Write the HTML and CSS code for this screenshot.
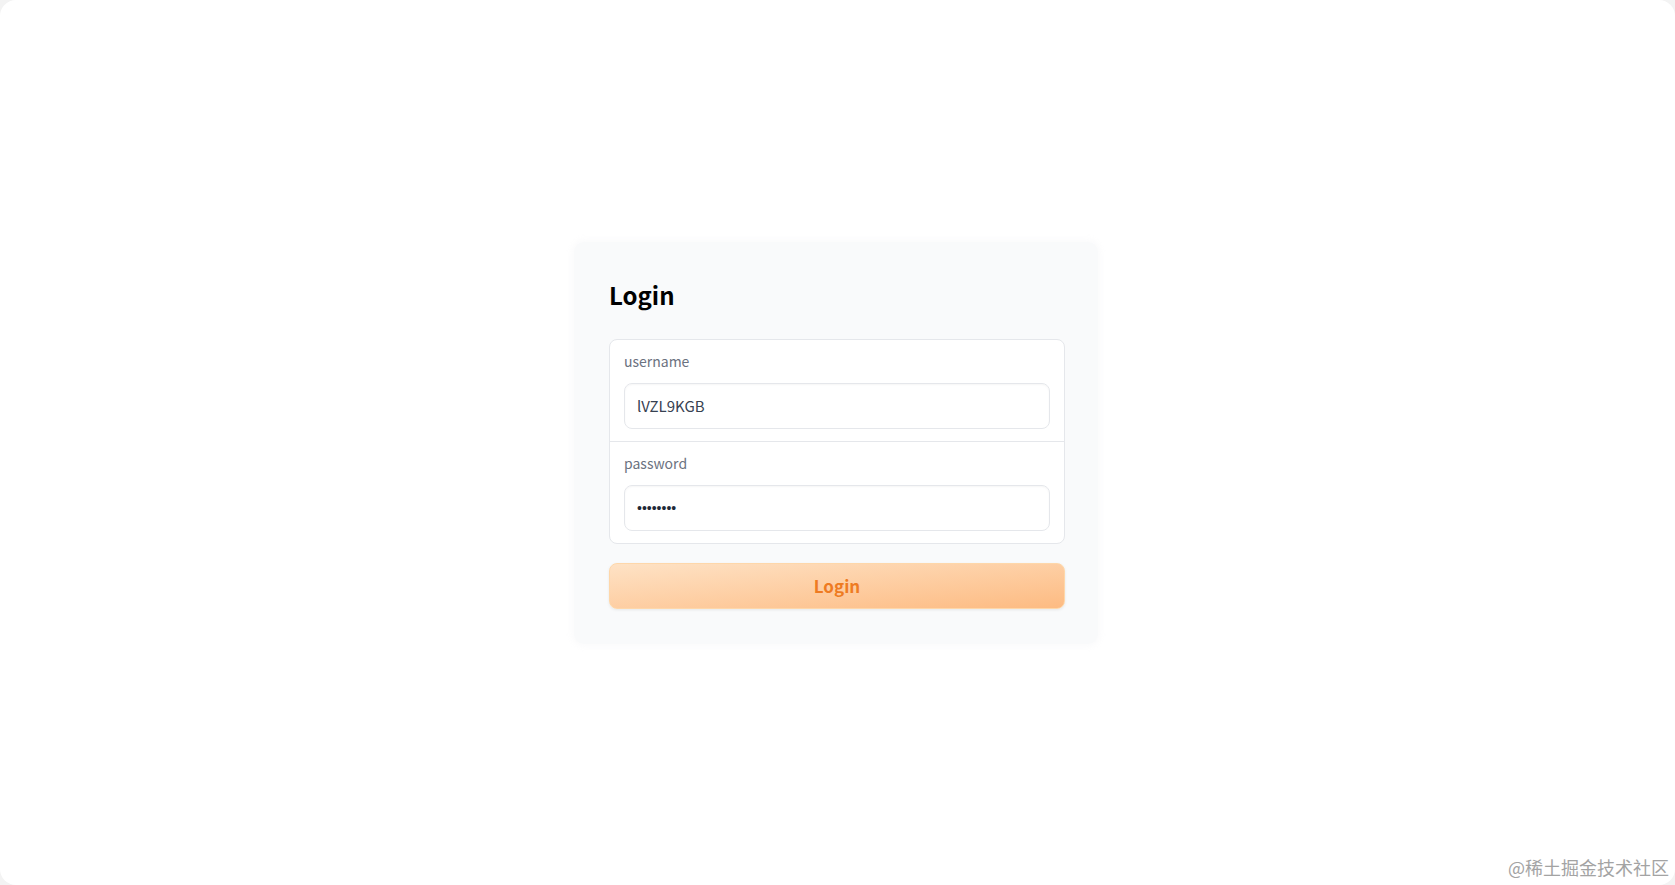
FILE: index.html
```
<!DOCTYPE html>
<html lang="en">
<head>
<meta charset="utf-8">
<title>Login</title>
<link rel="stylesheet" href="styles.css">
</head>
<body>
<div class="frame">
  <div class="card">
    <h2 class="title">Login</h2>
    <div class="form">
      <label class="block">
        <span class="label">username</span>
        <input class="input" type="text" value="lVZL9KGB">
      </label>
      <label class="block">
        <span class="label">password</span>
        <input class="input pwd" type="password" value="12345678">
      </label>
    </div>
    <button class="btn" type="button">Login</button>
  </div>
  <div class="watermark">@稀土掘金技术社区</div>
</div>
</body>
</html>
```
FILE: styles.css
```
* { box-sizing: border-box; }
html { background: #f3f3f3; }
body {
  margin: 0;
  font-family: "Noto Sans CJK SC", "Noto Sans", sans-serif;
}
.frame {
  position: relative;
  height: 885px;
  background: #ffffff;
  border-radius: 16px;
  display: flex;
  align-items: center;
  justify-content: center;
}
.card {
  width: 524px;
  margin-right: 3px;
  padding: 36px 33px 35px 35px;
  background: #f9fafb;
  border-radius: 10px;
  box-shadow: 0 0 6px 2px rgba(249, 250, 251, 0.9);
  display: flex;
  flex-direction: column;
}
.title {
  margin: 0 0 27px;
  font-size: 24px;
  line-height: 34px;
  font-weight: 700;
  color: #000;
}
.form {
  border: 1px solid #e5e7eb;
  border-radius: 8px;
  background: #fff;
  display: flex;
  flex-direction: column;
  overflow: hidden;
}
.block {
  display: flex;
  flex-direction: column;
  gap: 12px;
  padding: 11px 14px 12px;
}
.block + .block {
  border-top: 1px solid #e5e7eb;
  padding-bottom: 12px;
}
.label {
  font-size: 14px;
  line-height: 20px;
  color: #6b7280;
}
.input {
  height: 46px;
  padding: 0 12px;
  border: 1px solid #e5e7eb;
  border-radius: 8px;
  background: #fff;
  box-shadow: inset 0 1px 2px rgba(0, 0, 0, 0.04);
  font-family: "Noto Sans CJK SC", "Noto Sans", sans-serif;
  font-size: 15px;
  color: #374151;
  outline: none;
}
.pwd {
  font-family: "Liberation Sans", sans-serif;
  font-size: 14px;
  color: #1f2937;
}
.btn {
  margin-top: 19px;
  height: 46px;
  border: 1px solid #fed7aa;
  border-radius: 8px;
  background: linear-gradient(to bottom right, #fee2c5, #fdbb82);
  box-shadow: 0 1px 3px rgba(0, 0, 0, 0.08);
  font-family: "Noto Sans CJK SC", "Noto Sans", sans-serif;
  font-size: 17px;
  font-weight: 600;
  color: #ee7b22;
  cursor: pointer;
}
.watermark {
  position: absolute;
  right: 6px;
  bottom: 6px;
  font-size: 18px;
  line-height: 24px;
  color: #a3a3a3;
}
```
